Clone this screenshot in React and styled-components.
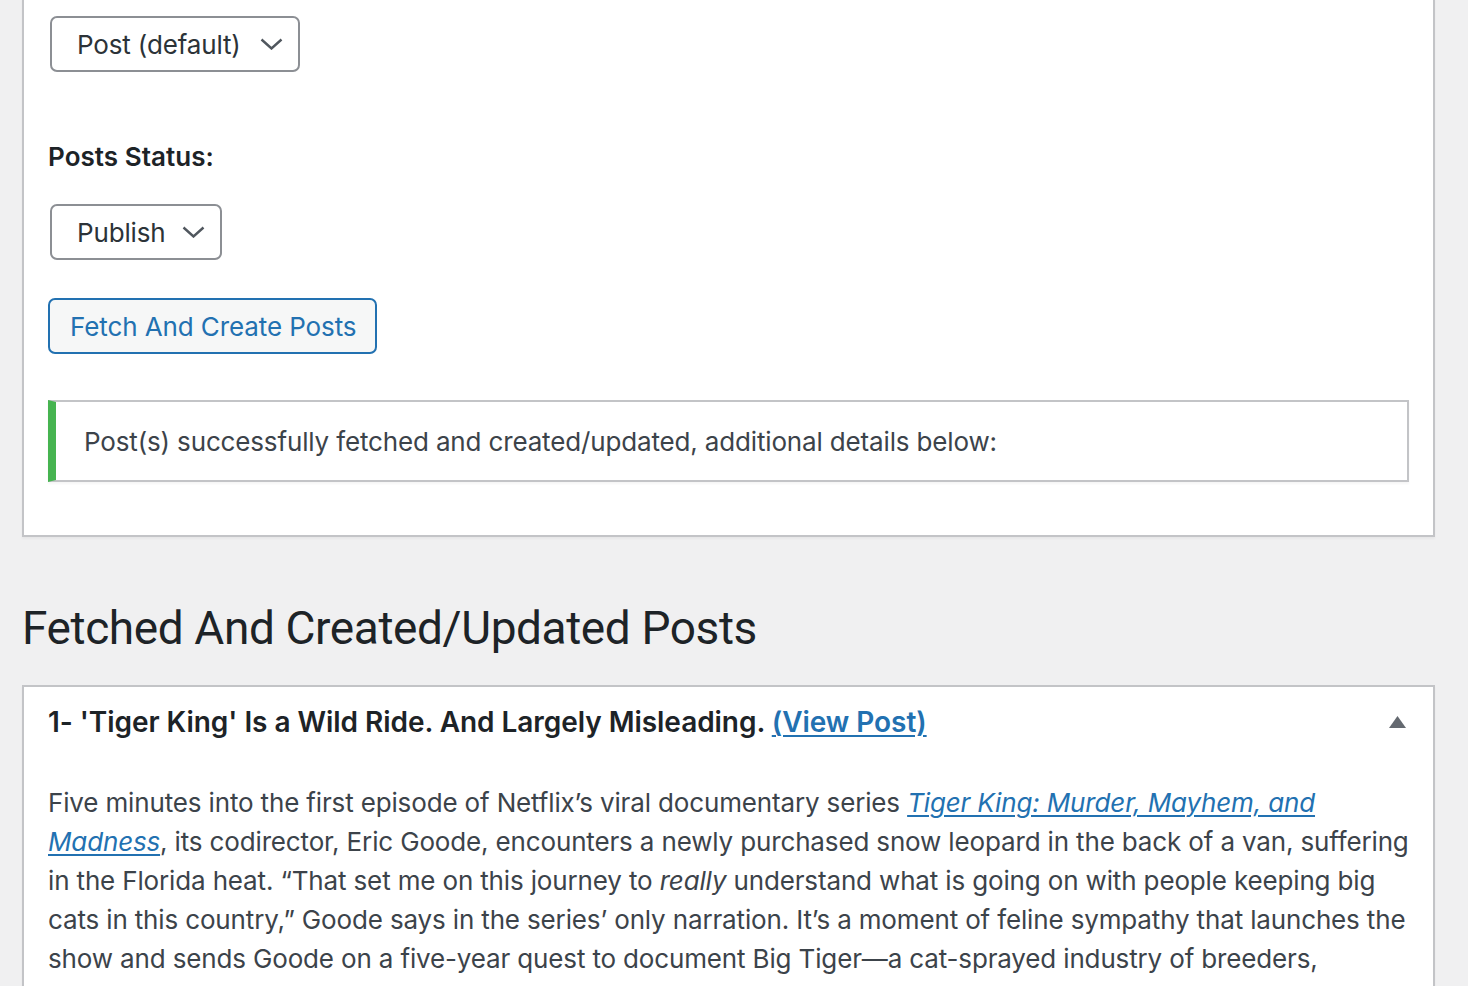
import React from "react";
import styled, { createGlobalStyle } from "styled-components";

const GlobalStyle = createGlobalStyle`
  html, body { margin: 0; padding: 0; overflow: hidden; background: #f0f0f1; }
  body {
    font-family: "Inter", "Noto Sans", sans-serif;
    font-size: 26px;
    line-height: 39px;
    color: #3c434a;
    -webkit-font-smoothing: antialiased;
  }
`;

const Page = styled.div`
  padding: 0 33px 0 22px;
  margin-top: -2px;
`;

const Card = styled.section`
  background: #fff;
  border: 2px solid #c3c4c7;
  box-shadow: 0 2px 2px rgba(0, 0, 0, 0.04);
  padding: ${(p) => p.$padding};
`;

const SelectBox = styled.div`
  display: inline-flex;
  align-items: center;
  box-sizing: border-box;
  height: 56px;
  margin-left: 2px;
  padding: 0 15px 0 25px;
  gap: ${(p) => p.$gap}px;
  border: 2px solid #8c8f94;
  border-radius: 7px;
  background: #fff;
  color: #2c3338;
  font-size: 26px;
  letter-spacing: -0.15px;
  cursor: pointer;
`;

const FieldLabel = styled.div`
  font-weight: 600;
  color: #1d2327;
  margin: 65px 0 28px;
  letter-spacing: 0.05px;
`;

const ButtonRow = styled.div`
  margin-top: 38px;
`;

const SecondaryButton = styled.button`
  box-sizing: border-box;
  height: 56px;
  padding: 0 19px 0 20px;
  border: 2px solid #2271b1;
  border-radius: 7px;
  background: #f6f7f7;
  color: #2271b1;
  font-family: inherit;
  font-size: 26px;
  letter-spacing: -0.1px;
  cursor: pointer;
`;

const Notice = styled.div`
  margin-top: 46px;
  border: 2px solid #c3c4c7;
  border-left: 8px solid #46b450;
  box-shadow: 0 2px 2px rgba(0, 0, 0, 0.04);
  padding: 20px 28px 19px;
  letter-spacing: -0.15px;
`;

const PageTitle = styled.h1`
  margin: 61px 0 27px;
  font-family: "Roboto", "Inter", sans-serif;
  font-size: 46px;
  line-height: 60px;
  font-weight: 400;
  letter-spacing: -0.4px;
  color: #1d2327;
`;

const PostHeader = styled.div`
  display: flex;
  align-items: center;
  justify-content: space-between;
`;

const PostTitle = styled.h2`
  margin: 0;
  font-size: 28px;
  line-height: 40px;
  font-weight: 600;
  color: #1d2327;
  letter-spacing: -0.05px;
`;

const TitleLink = styled.a`
  color: #2271b1;
  text-decoration: underline;
  text-underline-offset: 3px;
  text-decoration-thickness: 2px;
`;

const Toggle = styled.button`
  display: flex;
  align-items: center;
  justify-content: center;
  padding: 0;
  margin-right: 3px;
  border: 0;
  background: none;
  cursor: pointer;
`;

const Body = styled.p`
  margin: 41px 0 0;
  letter-spacing: -0.15px;
`;

const ItalicLink = styled.a`
  color: #2271b1;
  font-style: italic;
  text-decoration: underline;
  text-underline-offset: 3px;
  text-decoration-thickness: 2px;
`;

const Chevron = () => (
  <svg width="23" height="12" viewBox="0 0 23 12" aria-hidden="true">
    <path d="M1.5 1.5 L11.5 10.5 L21.5 1.5" fill="none" stroke="#50575e" strokeWidth="2.4" />
  </svg>
);

const Caret = () => (
  <svg width="17" height="12" viewBox="0 0 17 12" aria-hidden="true">
    <path d="M8.5 0 L17 12 L0 12 Z" fill="#646970" />
  </svg>
);

export default function App() {
  return (
    <>
      <GlobalStyle />
      <Page>
        <Card $padding="16px 24px 53px">
          <SelectBox $gap={19}>
            Post (default) <Chevron />
          </SelectBox>
          <FieldLabel>Posts Status:</FieldLabel>
          <SelectBox $gap={16}>
            Publish <Chevron />
          </SelectBox>
          <ButtonRow>
            <SecondaryButton>Fetch And Create Posts</SecondaryButton>
          </ButtonRow>
          <Notice>Post(s) successfully fetched and created/updated, additional details below:</Notice>
        </Card>

        <PageTitle>Fetched And Created/Updated Posts</PageTitle>

        <Card $padding="15px 24px 40px">
          <PostHeader>
            <PostTitle>
              1- 'Tiger King' Is a Wild Ride. And Largely Misleading.{" "}
              <TitleLink href="#">(View Post)</TitleLink>
            </PostTitle>
            <Toggle aria-label="Toggle panel">
              <Caret />
            </Toggle>
          </PostHeader>
          <Body>
            Five minutes into the first episode of Netflix’s viral documentary series{" "}
            <ItalicLink href="#">Tiger King: Murder, Mayhem, and Madness</ItalicLink>, its codirector, Eric
            Goode, encounters a newly purchased snow leopard in the back of a van, suffering in the Florida
            heat. “That set me on this journey to <em>really</em> understand what is going on with people
            keeping big cats in this country,” Goode says in the series’ only narration. It’s a moment of
            feline sympathy that launches the show and sends Goode on a five-year quest to document Big
            Tiger—a cat-sprayed industry of breeders,
          </Body>
        </Card>
      </Page>
    </>
  );
}
